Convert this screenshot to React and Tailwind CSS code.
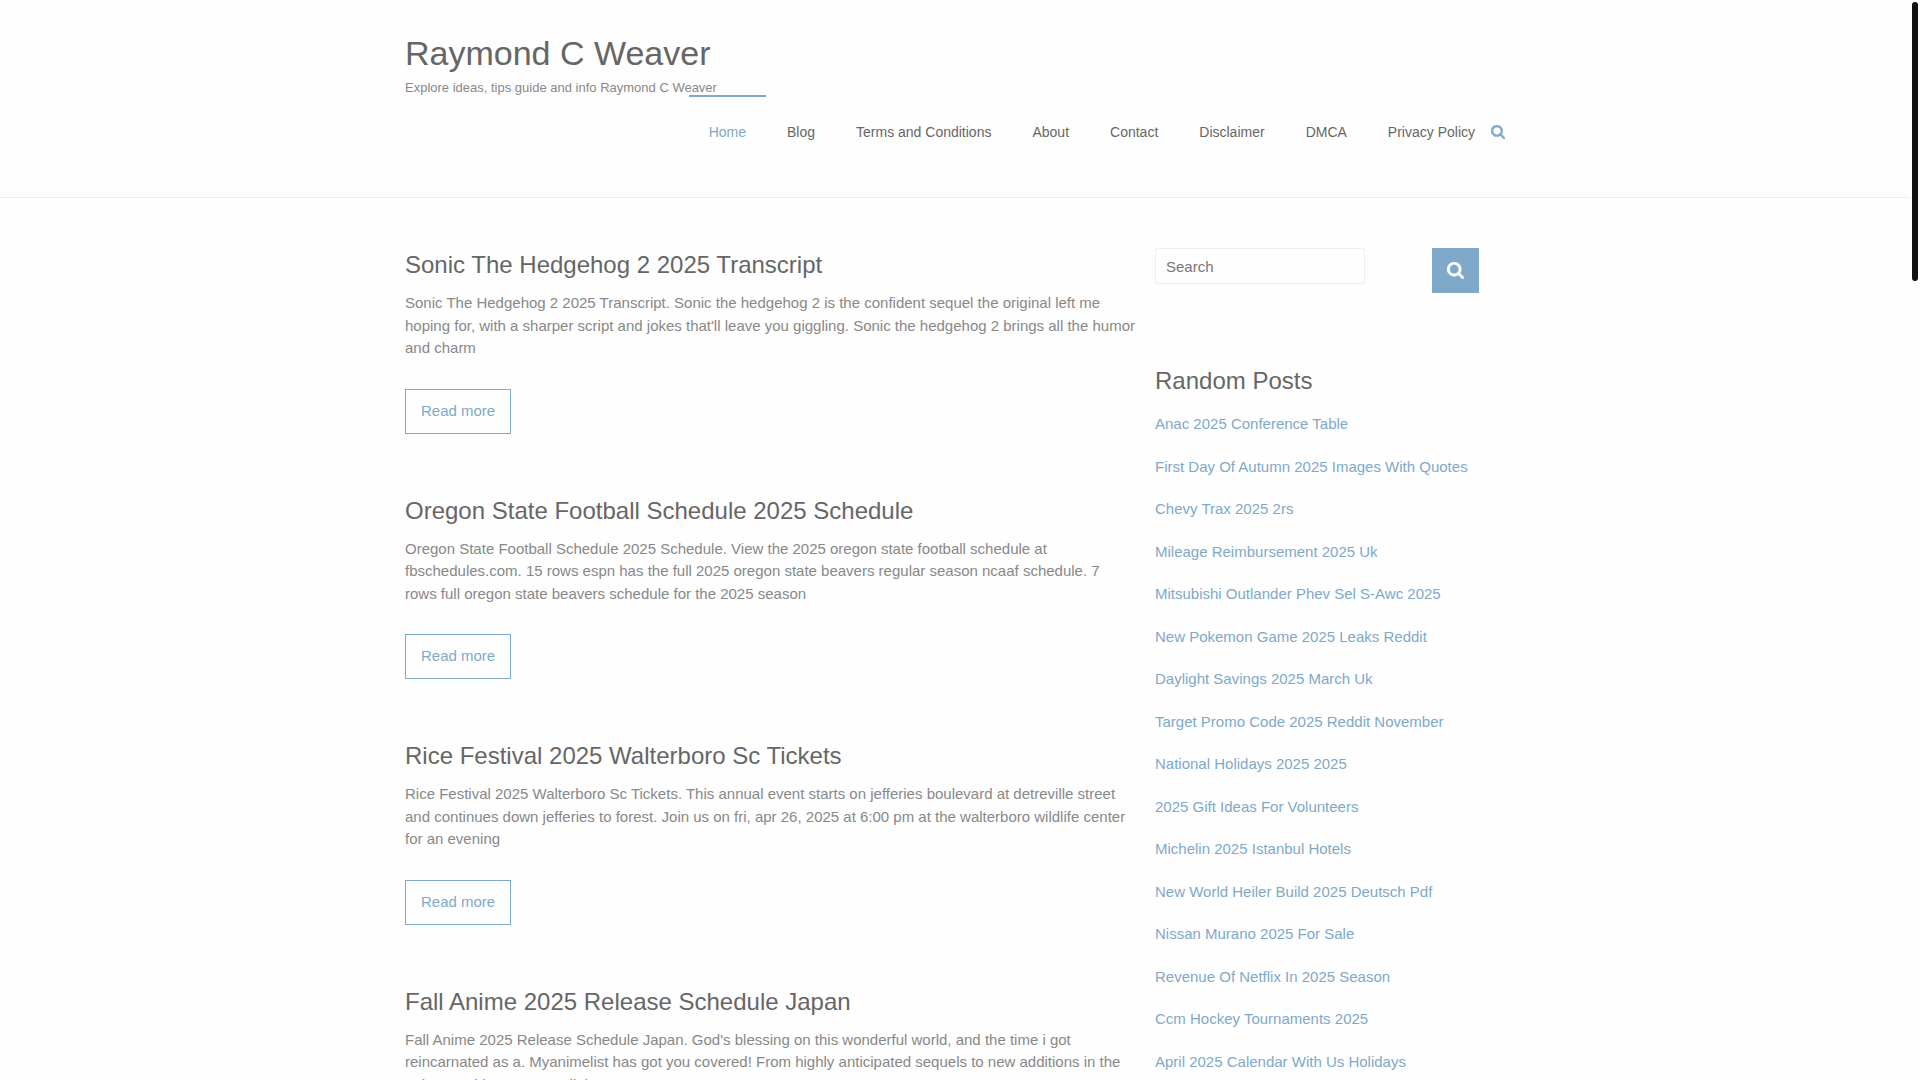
import React from "react";

const navLinks = [
	"Home",
	"Blog",
	"Terms and Conditions",
	"About",
	"Contact",
	"Disclaimer",
	"DMCA",
	"Privacy Policy",
];

const posts = [
	{
		title: "Sonic The Hedgehog 2 2025 Transcript",
		lines: [
			"Sonic The Hedgehog 2 2025 Transcript. Sonic the hedgehog 2 is the confident sequel the original left me",
			"hoping for, with a sharper script and jokes that'll leave you giggling. Sonic the hedgehog 2 brings all the humor",
			"and charm",
		],
	},
	{
		title: "Oregon State Football Schedule 2025 Schedule",
		lines: [
			"Oregon State Football Schedule 2025 Schedule. View the 2025 oregon state football schedule at",
			"fbschedules.com. 15 rows espn has the full 2025 oregon state beavers regular season ncaaf schedule. 7",
			"rows full oregon state beavers schedule for the 2025 season",
		],
	},
	{
		title: "Rice Festival 2025 Walterboro Sc Tickets",
		lines: [
			"Rice Festival 2025 Walterboro Sc Tickets. This annual event starts on jefferies boulevard at detreville street",
			"and continues down jefferies to forest. Join us on fri, apr 26, 2025 at 6:00 pm at the walterboro wildlife center",
			"for an evening",
		],
	},
	{
		title: "Fall Anime 2025 Release Schedule Japan",
		lines: [
			"Fall Anime 2025 Release Schedule Japan. God's blessing on this wonderful world, and the time i got",
			"reincarnated as a. Myanimelist has got you covered! From highly anticipated sequels to new additions in the",
			"anime world, we've got all the",
		],
	},
];

const randomPosts = [
	"Anac 2025 Conference Table",
	"First Day Of Autumn 2025 Images With Quotes",
	"Chevy Trax 2025 2rs",
	"Mileage Reimbursement 2025 Uk",
	"Mitsubishi Outlander Phev Sel S-Awc 2025",
	"New Pokemon Game 2025 Leaks Reddit",
	"Daylight Savings 2025 March Uk",
	"Target Promo Code 2025 Reddit November",
	"National Holidays 2025 2025",
	"2025 Gift Ideas For Volunteers",
	"Michelin 2025 Istanbul Hotels",
	"New World Heiler Build 2025 Deutsch Pdf",
	"Nissan Murano 2025 For Sale",
	"Revenue Of Netflix In 2025 Season",
	"Ccm Hockey Tournaments 2025",
	"April 2025 Calendar With Us Holidays",
];

const SearchIcon = ({ className }) => (
	<svg
		viewBox="0 0 1664 1664"
		fill="currentColor"
		stroke="currentColor"
		strokeWidth="30"
		className={className}
	>
		<path d="M1152 704q0-185-131.500-316.500t-316.500-131.500-316.500 131.500-131.500 316.500 131.500 316.500 316.500 131.500 316.500-131.500 131.500-316.500zM1664 1536q0 52-38 90t-90 38q-54 0-90-38l-343-342q-179 124-399 124-143 0-273.500-55.500t-225-150-150-225-55.500-273.500 55.500-273.500 150-225 225-150 273.500-55.500 273.500 55.500 225 150 150 225 55.500 273.500q0 220-124 399l343 343q37 37 37 90z" />
	</svg>
);

const Header = () => (
	<header className="border-b border-[#eeeeee]">
		<div className="max-w-[1100px] mx-auto pt-8 pb-[30px]">
			<a href="#" className="block text-[34px] leading-[42px] text-[#666666]">
				Raymond C Weaver
			</a>
			<p className="pt-1 text-[13px] leading-5 -mb-[3px]">
				Explore ideas, tips guide and info Raymond C Weaver
			</p>
			<nav className="flex justify-end items-start text-sm text-[#666666]">
				<ul className="flex gap-px">
					{navLinks.map((link) => (
						<li key={link}>
							<a
								href="#"
								className={
									link === "Home"
										? "block border-t-2 border-[#7fa9c9] px-5 leading-[70px] text-[#7fa9c9]"
										: "block border-t-2 border-transparent px-5 leading-[70px]"
								}
							>
								{link}
							</a>
						</li>
					))}
				</ul>
				<button
					aria-label="Open search"
					className="-ml-1 pt-[30px] text-[#7fa9c9]"
				>
					<SearchIcon className="w-[14px] h-[14px]" />
				</button>
			</nav>
		</div>
	</header>
);

const Post = ({ post }) => (
	<article className="pb-[60px]">
		<h2 className="pb-[10px] text-2xl leading-[34px] text-[#666666]">
			<a href="#">{post.title}</a>
		</h2>
		<p className="pb-[29px]">
			{post.lines.map((line, i) => (
				<React.Fragment key={line}>
					{i > 0 && <br />}
					{line}
				</React.Fragment>
			))}
		</p>
		<a
			href="#"
			className="block w-fit border border-[#7fa9c9] px-[15px] pt-[10px] pb-[11px] leading-[22px] text-[#7fa9c9]"
		>
			Read more
		</a>
	</article>
);

const Sidebar = () => (
	<aside className="w-[324px] shrink-0">
		<form className="flex justify-between items-start pb-[71px]">
			<input
				type="text"
				aria-label="Search"
				placeholder="Search"
				className="w-[210px] h-9 border border-[#eeeeee] rounded-[3px] px-[10px] placeholder:text-[#777777]"
			/>
			<button
				type="button"
				aria-label="Submit search"
				className="flex items-center justify-center w-[47px] h-[45px] bg-[#7fa9c9] text-white"
			>
				<SearchIcon className="w-[17px] h-[17px]" />
			</button>
		</form>
		<h3 className="pb-[15px] text-2xl leading-[34px] text-[#666666]">
			Random Posts
		</h3>
		<ul className="text-[#7fa9c9]">
			{randomPosts.map((title) => (
				<li key={title} className="pb-5">
					<a href="#">{title}</a>
				</li>
			))}
		</ul>
	</aside>
);

const App = () => {
	return (
		<div className="h-screen overflow-hidden bg-[#fefefe] pr-[10px] font-['Liberation_Sans',Arial,sans-serif] text-[15px] leading-normal text-[#888888]">
			<Header />
			<div className="flex gap-4 max-w-[1100px] mx-auto pt-[50px] pr-[26px]">
				<main className="flex-1">
					{posts.map((post) => (
						<Post key={post.title} post={post} />
					))}
				</main>
				<Sidebar />
			</div>
			<div className="fixed top-[2px] right-[2px] w-[6px] h-[279px] rounded-full bg-[#111111]" />
		</div>
	);
};

export default App;
